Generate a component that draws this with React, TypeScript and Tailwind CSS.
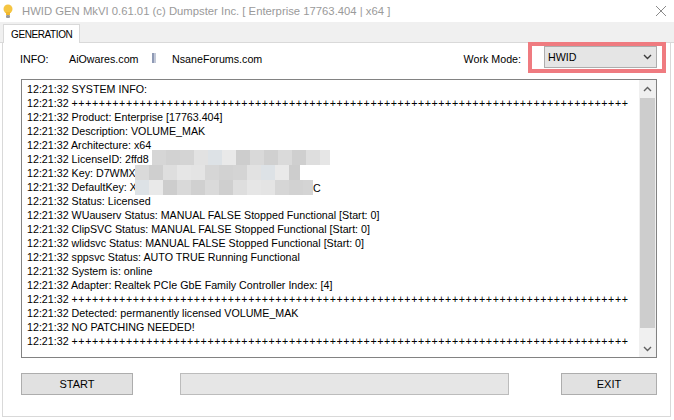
import React from 'react';

const T = '12:21:32 ';
const PLUS = '+'.repeat(82);

const lines: string[] = [
  'SYSTEM INFO:',
  PLUS,
  'Product: Enterprise [17763.404]',
  'Description: VOLUME_MAK',
  'Architecture: x64',
  'LicenseID: 2ffd8',
  'Key: D7WMX',
  'DefaultKey: X',
  'Status: Licensed',
  'WUauserv Status: MANUAL FALSE Stopped Functional [Start: 0]',
  'ClipSVC Status: MANUAL FALSE Stopped Functional [Start: 0]',
  'wlidsvc Status: MANUAL FALSE Stopped Functional [Start: 0]',
  'sppsvc Status: AUTO TRUE Running Functional',
  'System is: online',
  'Adapter: Realtek PCIe GbE Family Controller Index: [4]',
  PLUS,
  'Detected: permanently licensed VOLUME_MAK',
  'NO PATCHING NEEDED!',
  PLUS,
];

// pixelated blur over the key fields: [x start, x end] per row, 15px rows
const mosaicRows: [number, number][] = [
  [17, 195],
  [0, 165],
  [0, 178],
];
const grays = [
  '#d6d6d6', '#e2e2e2', '#cdcdcd', '#dadada', '#e6e6e6', '#d2d2d2', '#dde2e6',
  '#d9d9d9', '#cfcfcf', '#e4e4e4', '#d4d4d4', '#e9e9e9', '#d0d0d0', '#dedede',
];

function Mosaic() {
  const rects: React.ReactNode[] = [];
  mosaicRows.forEach(([x0, x1], r) => {
    for (let x = x0, i = 0; x < x1; x += 14, i++) {
      rects.push(
        <rect
          key={`${r}-${i}`}
          x={x}
          y={r * 15}
          width={Math.min(14, x1 - x)}
          height={15}
          fill={grays[(i * 5 + r * 3) % grays.length]}
        />
      );
    }
  });
  return (
    <svg className="absolute left-[135px] top-[150px]" width="196" height="45">
      {rects}
    </svg>
  );
}

function Bulb() {
  return (
    <svg width="10" height="15" viewBox="0 0 10 15">
      <circle cx="5" cy="5" r="4.5" fill="#f5c542" />
      <rect x="3" y="8" width="4" height="3" fill="#f1b82d" />
      <rect x="3" y="11" width="4" height="3" rx="1" fill="#9a9a9a" />
    </svg>
  );
}

function Chevron({ up, color = '#606060' }: { up?: boolean; color?: string }) {
  return (
    <svg width="9" height="6" viewBox="0 0 9 6">
      <polyline
        points={up ? '1,5 4.5,1.5 8,5' : '1,1 4.5,4.5 8,1'}
        fill="none"
        stroke={color}
        strokeWidth="1.4"
      />
    </svg>
  );
}

export default function App() {
  return (
    <div
      className="relative w-[674px] h-[420px] bg-white flex flex-col text-black overflow-hidden"
      style={{ fontFamily: '"Liberation Sans", Arial, sans-serif' }}
    >
      {/* title bar */}
      <div className="h-[22px] flex items-center pl-[3px] pr-[6px]">
        <Bulb />
        <span className="ml-[9px] text-[11.3px] text-[#9a9a9a] whitespace-nowrap">
          HWID GEN MkVI 0.61.01 (c) Dumpster Inc. [ Enterprise 17763.404 | x64 ]
        </span>
        <div className="flex-1" />
        <svg width="12" height="12" viewBox="0 0 12 12" className="mr-[1px]">
          <path d="M1 1L11 11M11 1L1 11" stroke="#8a8a8a" strokeWidth="1" />
        </svg>
      </div>

      {/* tab strip */}
      <div className="h-[21px] bg-[#f0f0f0] flex items-end pl-[3px] border-b border-[#d9d9d9]">
        <div className="h-[19px] -mb-px bg-white border border-b-0 border-[#d9d9d9] px-[7px] flex items-center text-[10px] tracking-[-0.4px]">
          GENERATION
        </div>
      </div>

      {/* panel */}
      <div className="flex-1 ml-[2px] mr-[3px] mb-[3px] border-l border-r border-b border-[#d9d9d9] flex flex-col pl-[18px] pr-[13px] text-[10.7px]">
        <div className="h-[36px] flex items-start pt-[3px]">
          <span className="w-[49px] mt-[5px] -ml-px">INFO:</span>
          <span className="w-[83px] mt-[5px]">AiOwares.com</span>
          <span className="w-[20px] mt-[7px]">
            <svg width="4" height="10" viewBox="0 0 4 10">
              <rect x="0" y="0" width="2" height="10" fill="#8f9ab5" />
              <rect x="2" y="0" width="2" height="10" fill="#c3c9d8" />
            </svg>
          </span>
          <span className="mt-[5px]">NsaneForums.com</span>
          <div className="flex-1" />
          <span className="mt-[5px] mr-[23px]">Work Mode:</span>
          <div className="w-[113px] h-[22px] bg-[#e5e5e5] border border-[#adadad] flex items-center pl-[3px] pr-[4px]">
            <span className="flex-1">HWID</span>
            <Chevron color="#3c3c3c" />
          </div>
        </div>

        {/* log */}
        <div className="h-[279px] border border-[#828282] flex">
          <div className="flex-1 overflow-hidden pl-[5px] pt-[2px] leading-[14px] whitespace-nowrap">
            {lines.map((l, i) => (
              <div key={i} className="h-[14px]">
                {l === PLUS ? (
                  <>
                    {T}
                    <span className="tracking-[0.55px]">{l}</span>
                  </>
                ) : (
                  T + l
                )}
              </div>
            ))}
          </div>
          <div className="w-[17px] bg-[#f0f0f0] flex flex-col">
            <div className="h-[18px] flex items-center justify-center">
              <Chevron up />
            </div>
            <div className="h-[230px] mx-px bg-[#cdcdcd]" />
            <div className="flex-1" />
            <div className="h-[17px] flex items-center justify-center">
              <Chevron />
            </div>
          </div>
        </div>

        {/* buttons */}
        <div className="mt-[15px] flex items-start text-[11px]">
          <button className="w-[112px] h-[22px] bg-[#e1e1e1] border border-[#adadad] flex items-center justify-center">
            START
          </button>
          <div className="ml-[47px] w-[329px] h-[22px] bg-[#e6e6e6] border border-[#bcbcbc]" />
          <div className="flex-1" />
          <button className="w-[96px] h-[22px] bg-[#e1e1e1] border border-[#adadad] flex items-center justify-center">
            EXIT
          </button>
        </div>
      </div>

      <Mosaic />
      <span className="absolute left-[313px] top-[181px] text-[10.7px] leading-[14px]">C</span>

      {/* highlight */}
      <div className="absolute left-[528px] top-[42px] w-[138px] h-[31px] border-[4px] border-[#ef7b80]" />
    </div>
  );
}
